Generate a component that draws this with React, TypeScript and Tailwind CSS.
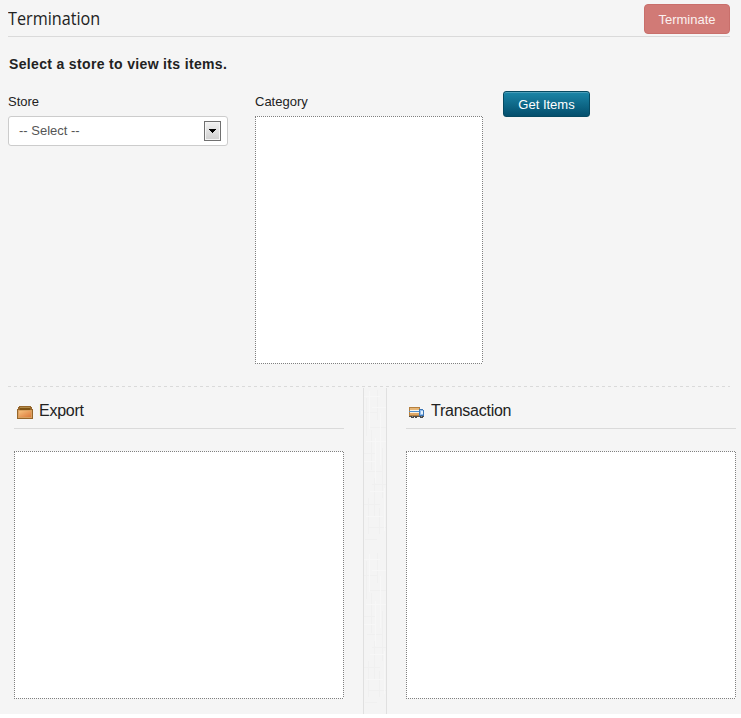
import React from "react";

const dottedX =
  "bg-[repeating-linear-gradient(90deg,#808080_0px_1px,#fafafa_1px_2px)]";
const dottedY =
  "bg-[repeating-linear-gradient(180deg,#808080_0px_1px,#fafafa_1px_2px)]";

function ListBox({ size }: { size: string }) {
  return (
    <div className={`flex flex-col bg-white ${size}`}>
      <div className={`h-px shrink-0 ${dottedX}`} />
      <div className="flex flex-1 justify-between">
        <div className={`w-px ${dottedY}`} />
        <div className={`w-px ${dottedY}`} />
      </div>
      <div className={`h-px shrink-0 ${dottedX}`} />
    </div>
  );
}

function BoxIcon() {
  return (
    <svg width="16" height="13" viewBox="0 0 16 13" shapeRendering="crispEdges">
      <defs>
        <linearGradient id="box" x1="0" y1="0" x2="1" y2="1">
          <stop offset="0" stopColor="#f6c07c" />
          <stop offset="1" stopColor="#dc7a3c" />
        </linearGradient>
      </defs>
      <path d="M2 0h12v1h1v2h1v10H0V3h1V1h1z" fill="#96662b" />
      <path d="M3 1h10v1H3z" fill="#b08a48" />
      <path d="M3 2h10v2H3z" fill="#805314" />
      <path d="M1 4h14v8H1z" fill="#d9a161" />
      <path d="M2 5h12v6H2z" fill="url(#box)" />
    </svg>
  );
}

function LorryIcon() {
  return (
    <svg width="15" height="11" viewBox="0 0 15 11" shapeRendering="crispEdges">
      <path d="M0 0h11v9H0z" fill="#b5803f" />
      <path d="M1 1h9v2H1z" fill="#e6b676" />
      <path d="M1 3h9v1H1z" fill="#f8f5ee" />
      <path d="M0 4h11v1H0z" fill="#4f8fd0" />
      <path d="M1 5h9v1H1z" fill="#f8f1e4" />
      <path d="M1 6h9v2H1z" fill="#e0a867" />
      <path d="M10 2h4v1h1v6h-5z" fill="#3d76b5" />
      <path d="M11 3h3v5h-3z" fill="#8fbcec" />
      <path d="M12 4h2v3h-2z" fill="#e4f0fb" />
      <path d="M0 9h15v1H0z" fill="#5c5248" />
      <path d="M2 9h3v2H2zM6 9h2v2H6zM11 9h3v2h-3z" fill="#484848" />
      <path d="M3 9h1v1H3zM12 9h1v1h-1z" fill="#8a8a8a" />
    </svg>
  );
}

function Linen() {
  return (
    <svg width="22" height="326" className="block">
      <defs>
        <pattern id="linen" width="22" height="163" patternUnits="userSpaceOnUse">
          <rect width="22" height="163" fill="#f4f4f4" />
          <path
            d="M2.5 10v38M7.5 42v40M13.5 2v30M18.5 60v50M4.5 110v36M10.5 90v38M15.5 120v26M0 24.5h14M6 39.5h16M0 65.5h12M3 83.5h15M8 96.5h14M0 116.5h16M5 139.5h17M1 151.5h12"
            stroke="#f0f0f0"
            fill="none"
          />
          <path
            d="M5.5 3v38M11.5 50v45M16.5 25v52M20.5 100v43M0 8.5h16M8 19.5h14M2 53.5h20M0 73.5h11M6 103.5h14M2 128.5h17"
            stroke="#f7f7f7"
            fill="none"
          />
        </pattern>
      </defs>
      <rect width="22" height="326" fill="url(#linen)" />
    </svg>
  );
}

function Panel({
  title,
  icon,
}: {
  title: string;
  icon: React.ReactNode;
}) {
  return (
    <section className="w-[330px] shrink-0">
      <h3 className="flex h-[41px] items-center border-b border-[#dadada] pt-[5px] pl-[3px] text-[16px] leading-5 tracking-[-0.25px]">
        <span className="mt-[3px] w-[22px]">{icon}</span>
        {title}
      </h3>
      <div className="pt-[22px]">
        <ListBox size="h-[248px] w-[330px]" />
      </div>
    </section>
  );
}

export default function App() {
  return (
    <div className="h-[718px] w-[741px] overflow-hidden bg-white font-['Liberation_Sans',Arial,sans-serif] text-[#222]">
      <main className="h-[714px] bg-[#f5f5f5]">
        <header className="ml-2 flex h-[37px] w-[722px] items-start justify-between border-b border-[#dadada]">
          <h1 className="origin-left scale-x-[0.9] pt-[6px] font-['Open_Sans','Noto_Sans',sans-serif] text-[18px] leading-6">
            Termination
          </h1>
          <button className="mt-1 h-[30px] w-[86px] rounded-[4px] border border-[#c96f6b] bg-[#d17a76] pt-px text-[13px] leading-[27px] text-[#fbf1f0]">
            Terminate
          </button>
        </header>

        <h2 className="ml-[9px] pt-[17px] text-[14px] leading-5 font-bold tracking-[0.34px]">
          Select a store to view its items.
        </h2>

        <div className="ml-2 flex h-[312px] items-start pt-[17px] text-[13px]">
          <div className="w-[247px]">
            <label className="block h-[25px] leading-[21px]">Store</label>
            <div className="flex h-[30px] w-[220px] items-center justify-between rounded-[3px] border border-[#ccc] bg-white pr-[6px] pl-[10px] text-[#555]">
              <span>-- Select --</span>
              <span className="flex h-5 w-[17px] items-center justify-center border border-[#707070] bg-linear-to-b from-[#f2f2f2] to-[#cfcfcf] shadow-[inset_0_0_0_1px_#f5f5f5]">
                <svg width="7" height="4" shapeRendering="crispEdges">
                  <path d="M0 0h7v1H6v1H5v1H4v1H3V3H2V2H1V1H0z" />
                </svg>
              </span>
            </div>
          </div>
          <div className="w-[248px]">
            <label className="block h-[25px] leading-[21px]">Category</label>
            <ListBox size="h-[248px] w-[228px]" />
          </div>
          <button className="h-[26px] w-[87px] rounded-[3px] border border-[#064a62] bg-linear-to-b from-[#1b86a8] to-[#044f6d] pt-[2px] text-[13px] leading-[22px] text-white shadow-[inset_0_1px_0_#4a9eb9]">
            Get Items
          </button>
        </div>

        <div className="ml-2 h-px w-[722px] bg-[repeating-linear-gradient(90deg,#dadada_0px_3px,#f5f5f5_3px_6px)]" />

        <div className="flex pt-px pl-[14px]">
          <Panel title="Export" icon={<BoxIcon />} />
          <div className="mr-[19px] ml-[19px] h-[326px] w-6 shrink-0 border-x border-[#e0e0e0]">
            <Linen />
          </div>
          <Panel title="Transaction" icon={<LorryIcon />} />
        </div>
      </main>
    </div>
  );
}
